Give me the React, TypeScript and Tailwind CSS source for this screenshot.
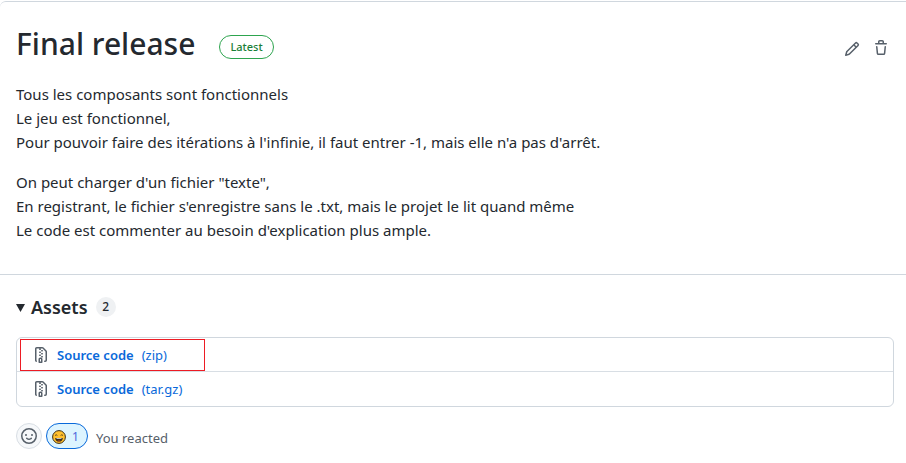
import React from "react";

const icons = {
  pencil:
    "M11.013 1.427a1.75 1.75 0 0 1 2.474 0l1.086 1.086a1.75 1.75 0 0 1 0 2.474l-8.61 8.61c-.21.21-.47.364-.756.445l-3.251.93a.75.75 0 0 1-.927-.928l.929-3.25c.081-.286.235-.547.445-.758l8.61-8.61Zm.176 4.823L9.75 4.81l-6.286 6.287a.253.253 0 0 0-.064.108l-.558 1.953 1.953-.558a.253.253 0 0 0 .108-.064Zm1.238-3.763a.25.25 0 0 0-.354 0L10.811 3.75l1.439 1.44 1.263-1.263a.25.25 0 0 0 0-.354Z",
  trash:
    "M11 1.75V3h2.25a.75.75 0 0 1 0 1.5H2.75a.75.75 0 0 1 0-1.5H5V1.75C5 .784 5.784 0 6.75 0h2.5C10.216 0 11 .784 11 1.75ZM4.496 6.675l.66 6.6a.25.25 0 0 0 .249.225h5.19a.25.25 0 0 0 .249-.225l.66-6.6a.75.75 0 0 1 1.492.149l-.66 6.6A1.748 1.748 0 0 1 10.595 15h-5.19a1.75 1.75 0 0 1-1.741-1.575l-.66-6.6a.75.75 0 1 1 1.492-.15ZM6.5 1.75V3h3V1.75a.25.25 0 0 0-.25-.25h-2.5a.25.25 0 0 0-.25.25Z",
  fileZip:
    "M3.5 1.75v11.5c0 .09.048.173.126.217a.75.75 0 0 1-.752 1.298A1.748 1.748 0 0 1 2 13.25V1.75C2 .784 2.784 0 3.75 0h5.586c.464 0 .909.185 1.237.513l2.914 2.914c.329.328.513.773.513 1.237v8.586A1.75 1.75 0 0 1 12.25 15h-.5a.75.75 0 0 1 0-1.5h.5a.25.25 0 0 0 .25-.25V4.664a.25.25 0 0 0-.073-.177L9.513 1.573a.25.25 0 0 0-.177-.073H7.25a.75.75 0 0 1 0 1.5h-.5a.75.75 0 0 1 0-1.5h-3a.25.25 0 0 0-.25.25Zm3.75 8.75h.5c.966 0 1.75.784 1.75 1.75v3a.75.75 0 0 1-.75.75h-2.5a.75.75 0 0 1-.75-.75v-3c0-.966.784-1.75 1.75-1.75ZM6 5.25a.75.75 0 0 1 .75-.75h.5a.75.75 0 0 1 0 1.5h-.5A.75.75 0 0 1 6 5.25Zm.75 2.25h.5a.75.75 0 0 1 0 1.5h-.5a.75.75 0 0 1 0-1.5ZM8 6.75A.75.75 0 0 1 8.75 6h.5a.75.75 0 0 1 0 1.5h-.5A.75.75 0 0 1 8 6.75ZM8.75 3h.5a.75.75 0 0 1 0 1.5h-.5a.75.75 0 0 1 0-1.5ZM8 9.75A.75.75 0 0 1 8.75 9h.5a.75.75 0 0 1 0 1.5h-.5A.75.75 0 0 1 8 9.75Zm-1 2.5v2.25h1v-2.25a.25.25 0 0 0-.25-.25h-.5a.25.25 0 0 0-.25.25Z",
  smiley:
    "M8 0a8 8 0 1 1 0 16A8 8 0 0 1 8 0ZM1.5 8a6.5 6.5 0 1 0 13 0 6.5 6.5 0 0 0-13 0Zm3.82 1.636a.75.75 0 0 1 1.038.175l.007.009c.103.118.22.222.35.31.264.178.683.37 1.285.37.602 0 1.02-.192 1.285-.371.13-.088.247-.192.35-.31l.007-.008a.75.75 0 0 1 1.222.87c-.2.28-.46.5-.75.68-.63.418-1.37.638-2.127.629-.946 0-1.652-.308-2.126-.63a3.331 3.331 0 0 1-.75-.68.75.75 0 0 1 .183-1.044ZM12 7a1 1 0 1 1-2 0 1 1 0 0 1 2 0ZM5 8a1 1 0 1 1 0-2 1 1 0 0 1 0 2Z",
};

function Icon({ name, className = "" }: { name: keyof typeof icons; className?: string }) {
  return (
    <svg viewBox="0 0 16 16" className={`size-4 shrink-0 fill-current ${className}`} aria-hidden="true">
      <path d={icons[name]} />
    </svg>
  );
}

function LaughFace() {
  return (
    <svg viewBox="0 0 14 14" className="size-3.5 shrink-0" aria-hidden="true">
      <circle cx="7" cy="7" r="6.4" fill="#ffc02e" stroke="#3a2f1c" strokeWidth="1" />
      <path d="M3 5.500q1.200-1.400 2.400 0M8.600 5.500q1.200-1.400 2.400 0" fill="none" stroke="#3a2f1c" strokeWidth=".8" />
      <path d="M3.200 8h7.600c0 2.200-1.500 3.700-3.800 3.700s-3.800-1.500-3.800-3.700Z" fill="#3a2f1c" />
      <path d="M4.500 8.300h5v.7h-5Z" fill="#fff" />
      <path d="M5.200 11q1.800-1.200 3.600 0-1.800.9-3.600 0Z" fill="#e8502e" />
    </svg>
  );
}

const assets = [
  { format: "zip", highlighted: true },
  { format: "tar.gz", highlighted: false },
];

export default function App() {
  return (
    <div className="bg-white pt-px font-['Noto_Sans',sans-serif] text-[#24292f]">
      <main className="rounded-tl-md border-t border-[#d0d7de]">
        <article className="border-b border-[#d0d7de] px-4 pt-[18px] pb-8">
          <header className="mb-[14px] flex items-center justify-between">
            <div className="flex items-center gap-6">
              <h1 className="text-[30px] leading-[48px] font-medium">Final release</h1>
              <span className="mt-[6px] rounded-full border border-[#2da44e] px-2.5 text-[11px] leading-[22px] font-medium text-[#1a7f37]">
                Latest
              </span>
            </div>
            <div className="flex items-start gap-[13px] pt-2 pr-px text-[#57606a]">
              <button aria-label="Edit release" className="block pt-px">
                <Icon name="pencil" />
              </button>
              <button aria-label="Delete release" className="block">
                <Icon name="trash" />
              </button>
            </div>
          </header>
          <p className="mb-4 text-[15px] leading-6">
            Tous les composants sont fonctionnels
            <br />
            Le jeu est fonctionnel,
            <br />
            Pour pouvoir faire des itérations à l'infinie, il faut entrer -1, mais elle n'a pas d'arrêt.
          </p>
          <p className="text-[15px] leading-6">
            On peut charger d'un fichier "texte",
            <br />
            En registrant, le fichier s'enregistre sans le .txt, mais le projet le lit quand même
            <br />
            Le code est commenter au besoin d'explication plus ample.
          </p>
        </article>

        <footer className="py-4 pr-3 pl-4">
          <details open>
            <summary className="mb-[14px] flex list-none items-center">
              <svg viewBox="0 0 10 10" className="mr-[5px] size-2.5" aria-hidden="true">
                <path d="M0 2h9L4.500 10Z" fill="#24292f" />
              </svg>
              <h2 className="text-lg leading-8 font-semibold">Assets</h2>
              <span className="ml-2 h-5 w-5 rounded-full bg-[#eff1f3] text-center text-xs leading-5 font-medium">
                2
              </span>
            </summary>
            <ul className="divide-y divide-[#d8dee4] rounded-md border border-[#d0d7de]">
              {assets.map((asset) => (
                <li key={asset.format} className="relative flex h-[34px] items-center pl-4 text-[13px] leading-5">
                  <Icon name="fileZip" className="text-[#57606a]" />
                  <a href="#" className="ml-2 flex gap-2 text-[#0969da]">
                    <span className="font-semibold">Source code</span>
                    <span>({asset.format})</span>
                  </a>
                  {asset.highlighted && (
                    <span className="pointer-events-none absolute top-px left-[3px] h-8 w-[185px] border border-[#ed1c24]" />
                  )}
                </li>
              ))}
            </ul>
          </details>
          <div className="mt-4 flex items-center gap-1 text-[13px]">
            <button
              aria-label="Add a reaction"
              className="flex size-[26px] items-center justify-center rounded-full border border-[#d8dee4] bg-[#f6f8fa] text-[#57606a]"
            >
              <Icon name="smiley" />
            </button>
            <button
              aria-label="Laugh, 1 reaction"
              className="flex h-[26px] w-[42px] items-center gap-1.5 rounded-full border border-[#0969da] bg-[#ddf4ff] pt-0.5 pl-[5px] text-xs text-[#4f68dc]"
            >
              <LaughFace />
              <span>1</span>
            </button>
            <span className="ml-1 pt-1 leading-5 text-[#57606a]">You reacted</span>
          </div>
        </footer>
      </main>
    </div>
  );
}
